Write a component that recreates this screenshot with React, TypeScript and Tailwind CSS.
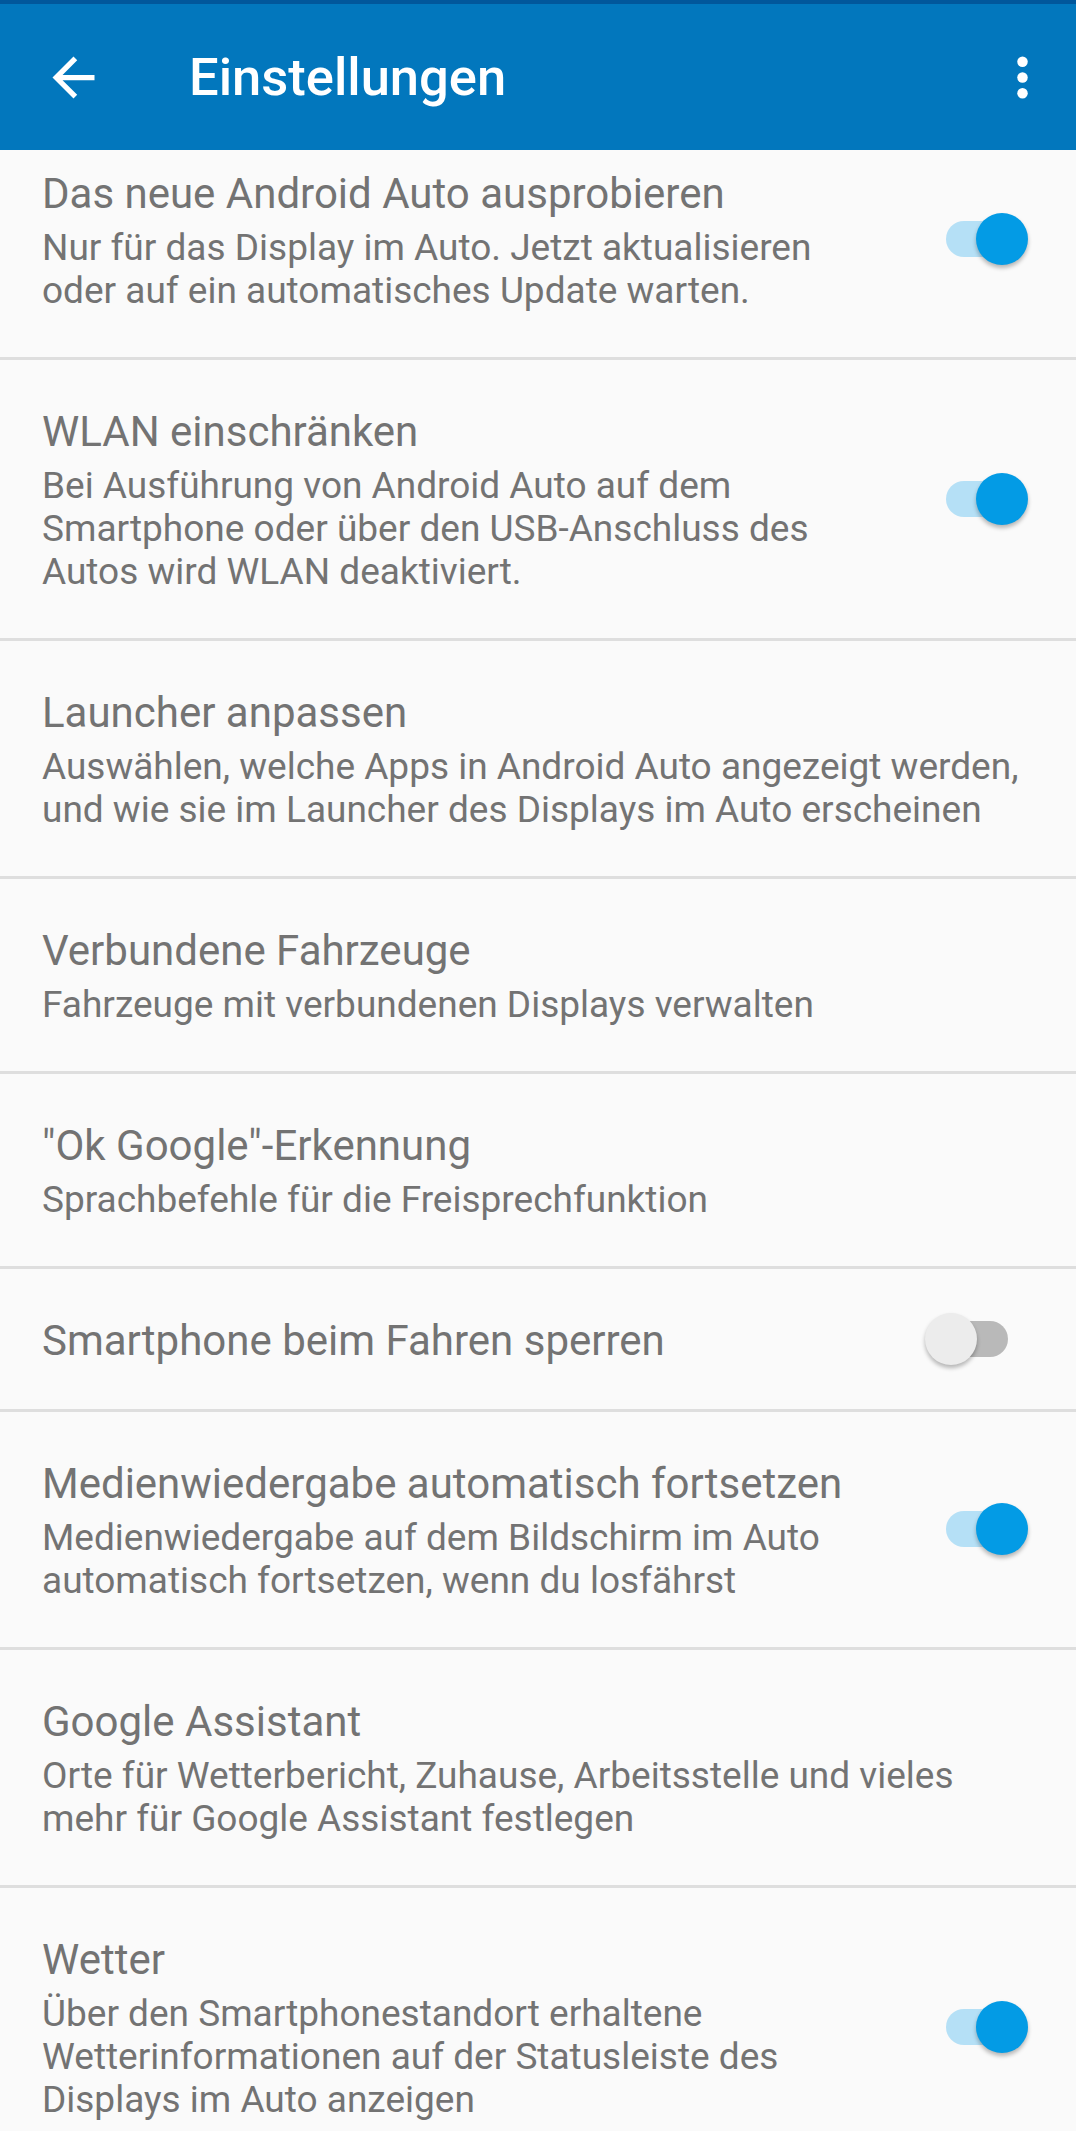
import React from 'react';

type Pref = {
  title: string;
  summary?: string[];
  toggle?: boolean;
};

const prefs: Pref[] = [
  {
    title: 'Das neue Android Auto ausprobieren',
    summary: ['Nur für das Display im Auto. Jetzt aktualisieren oder auf ein automatisches Update warten.'],
    toggle: true,
  },
  {
    title: 'WLAN einschränken',
    summary: ['Bei Ausführung von Android Auto auf dem Smartphone oder über den USB-Anschluss des Autos wird WLAN deaktiviert.'],
    toggle: true,
  },
  {
    title: 'Launcher anpassen',
    summary: ['Auswählen, welche Apps in Android Auto angezeigt werden, und wie sie im Launcher des Displays im Auto erscheinen'],
  },
  {
    title: 'Verbundene Fahrzeuge',
    summary: ['Fahrzeuge mit verbundenen Displays verwalten'],
  },
  {
    title: '"Ok Google"-Erkennung',
    summary: ['Sprachbefehle für die Freisprechfunktion'],
  },
  {
    title: 'Smartphone beim Fahren sperren',
    toggle: false,
  },
  {
    title: 'Medienwiedergabe automatisch fortsetzen',
    summary: ['Medienwiedergabe auf dem Bildschirm im Auto automatisch fortsetzen, wenn du losfährst'],
    toggle: true,
  },
  {
    title: 'Google Assistant',
    summary: ['Orte für Wetterbericht, Zuhause, Arbeitsstelle und vieles mehr für Google Assistant festlegen'],
  },
  {
    title: 'Wetter',
    summary: ['Über den Smartphonestandort erhaltene Wetterinformationen auf der Statusleiste des Displays im Auto anzeigen'],
    toggle: true,
  },
];

const Switch: React.FC<{ on: boolean }> = ({ on }) => (
  <div className="relative w-[103px] h-[52px] shrink-0 ml-[45px] -mt-[3px]">
    <div
      className={
        on
          ? 'absolute left-[21px] top-[8px] w-[62px] h-[36px] rounded-full bg-[#b5e0f6]'
          : 'absolute left-[21px] top-[8px] w-[62px] h-[36px] rounded-full bg-[#b9b9b9]'
      }
    />
    <div
      className={
        on
          ? 'absolute left-[51px] top-0 w-[52px] h-[52px] rounded-full bg-[#039be5] shadow-[0_3px_4px_rgba(0,0,0,0.28)]'
          : 'absolute left-0 top-0 w-[52px] h-[52px] rounded-full bg-[#ececec] shadow-[0_3px_4px_rgba(0,0,0,0.28)]'
      }
    />
  </div>
);

export default function App() {
  return (
    <div className="w-[1076px] h-[2131px] overflow-hidden bg-[#fafafa] font-['Roboto',sans-serif] flex flex-col">
      {/* Toolbar */}
      <div className="relative z-10 shrink-0">
        <div className="h-[4px] bg-[#01579b]" />
        <div className="h-[146px] bg-[#0277bd] flex items-center pl-[42px] pr-[22px]">
          <svg viewBox="0 0 24 24" className="w-[63px] h-[63px] shrink-0" fill="#ffffff">
            <path d="M20 11H7.83l5.59-5.59L12 4l-8 8 8 8 1.41-1.41L7.83 13H20v-2z" />
          </svg>
          <div className="ml-[84px] flex-1 text-white text-[52.5px] font-medium leading-[62px]">Einstellungen</div>
          <svg viewBox="0 0 24 24" className="w-[63px] h-[63px] shrink-0" fill="#ffffff">
            <circle cx="12" cy="6" r="2" />
            <circle cx="12" cy="12" r="2" />
            <circle cx="12" cy="18" r="2" />
          </svg>
        </div>
      </div>

      {/* Preference list, scrolled slightly */}
      <div className="flex-1 overflow-hidden">
        <div className="-mt-[28px]">
          {prefs.map((p, i) => (
            <div
              key={i}
              className={
                p.toggle === undefined
                  ? 'flex items-center pl-[42px] pr-[42px] pt-[47px] pb-[45px] border-b-[3px] border-[#dedede]'
                  : p.summary
                    ? 'flex items-center pl-[42px] pr-[48px] pt-[47px] pb-[45px] border-b-[3px] border-[#dedede]'
                    : 'flex items-center pl-[42px] pr-[48px] pt-[47px] pb-[44px] border-b-[3px] border-[#dedede]'
              }
            >
              <div className="flex-1 min-w-0 text-[#737373]">
                <div className="text-[42px] leading-[49px]">{p.title}</div>
                {p.summary && (
                  <div className="mt-[8px] text-[37px] leading-[43px]">{p.summary.join(' ')}</div>
                )}
              </div>
              {p.toggle !== undefined && <Switch on={p.toggle} />}
            </div>
          ))}
        </div>
      </div>
    </div>
  );
}
